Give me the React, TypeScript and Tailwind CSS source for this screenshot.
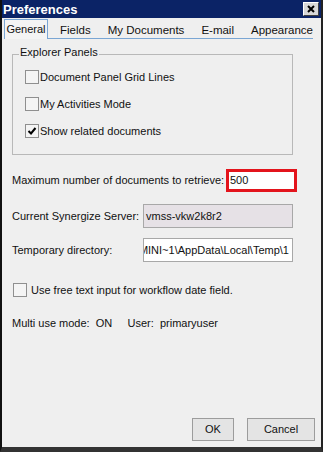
const font = { fontFamily: '"Liberation Sans", Arial, sans-serif' };

function Check({ checked }: { checked?: boolean }) {
  return (
    <span className="w-[14px] h-[14px] border border-[#8f8f8f] bg-[#f4f4f4] flex items-center justify-center shrink-0">
      {checked && (
        <svg width="10" height="10" viewBox="0 0 10 10">
          <path d="M1.5 5 L4 7.5 L8.5 2" stroke="#000" strokeWidth="2" fill="none" />
        </svg>
      )}
    </span>
  );
}

function CheckRow({ label, checked }: { label: string; checked?: boolean }) {
  return (
    <div className="flex items-center h-[14px]">
      <Check checked={checked} />
      <span className="ml-px whitespace-nowrap">{label}</span>
    </div>
  );
}

export default function App() {
  const tabs = ["Fields", "My Documents", "E-mail", "Appearance"];

  return (
    <div
      className="w-[323px] h-[452px] bg-[#efefef] text-[11px] text-[#111] flex flex-col border-l-2 border-r-2 border-b-[5px] border-l-[#111] border-r-[#222] border-b-[#333] overflow-hidden"
      style={font}
    >
      {/* title bar */}
      <div className="h-[18px] bg-[#0b2366] flex items-center justify-between pl-[1px] pr-[2px] shrink-0">
        <span className="text-white font-bold text-[13px] leading-none">Preferences</span>
        <span className="w-[16px] h-[14px] bg-[#d8d8d8] border border-t-white border-l-white border-b-[#404040] border-r-[#404040] flex items-center justify-center">
          <svg width="8" height="8" viewBox="0 0 8 8">
            <path d="M1 1 L7 7 M7 1 L1 7" stroke="#000" strokeWidth="2" />
          </svg>
        </span>
      </div>

      {/* tabs */}
      <div className="h-[21px] flex items-end pl-[2px] pr-[8px] shrink-0">
        <div className="h-[20px] w-[56px] border border-b-0 border-[#7aa6d4] bg-[#f4f4f4] flex items-center justify-center text-[11px]">
          General
        </div>
        <div className="flex-1 h-[17px] border-b border-[#7aa6d4] flex items-center gap-[17px] pl-[12px] whitespace-nowrap text-[11.5px]">
          {tabs.map((t) => (
            <span key={t} className="pt-[2px]">{t}</span>
          ))}
        </div>
      </div>

      {/* body */}
      <div className="flex-1 flex flex-col px-[10px] pt-[9px]">
        <div className="relative border border-[#b8b8b8] h-[101px] w-[281px] mt-[6px] flex flex-col gap-[13px] pl-[12px] pt-[15px]">
          <span className="absolute -top-[8px] left-[6px] bg-[#efefef] px-[1px] leading-none">Explorer Panels</span>
          <CheckRow label="Document Panel Grid Lines" />
          <CheckRow label="My Activities Mode" />
          <CheckRow label="Show related documents" checked />
        </div>

        <div className="flex items-center mt-[14px] h-[23px]">
          <span className="w-[214px] shrink-0 whitespace-nowrap">Maximum number of documents to retrieve:</span>
          <div className="w-[71px] h-[23px] border-[3px] border-[#e3141c] bg-white flex items-center pl-[1px]">500</div>
        </div>

        <div className="flex items-center mt-[12px] h-[24px]">
          <span className="w-[131px] shrink-0 whitespace-nowrap">Current Synergize Server:</span>
          <div className="w-[150px] h-[24px] border border-[#a8a8a8] bg-[#e6e1e6] flex items-center pl-[2px]">vmss-vkw2k8r2</div>
        </div>

        <div className="flex items-center mt-[10px] h-[24px]">
          <span className="w-[131px] shrink-0 whitespace-nowrap">Temporary directory:</span>
          <div className="w-[150px] h-[24px] border border-[#a8a8a8] bg-white flex items-center justify-end pr-[3px] overflow-hidden whitespace-nowrap">
            <span className="shrink-0">\ADMINI~1\AppData\Local\Temp\1</span>
          </div>
        </div>

        <div className="flex items-center mt-[21px] ml-[1px] h-[14px]">
          <Check />
          <span className="ml-[4px] whitespace-nowrap">Use free text input for workflow date field.</span>
        </div>

        <div className="mt-[18px] whitespace-pre">Multi use mode:  ON     User:  primaryuser</div>

        <div className="flex-1" />

        <div className="flex justify-end gap-[13px] mb-[6px] mr-[-4px]">
          <button className="w-[42px] h-[23px] border border-[#9c9c9c] bg-[#e4e4e4]">OK</button>
          <button className="w-[68px] h-[23px] border border-[#9c9c9c] bg-[#e4e4e4]">Cancel</button>
        </div>
      </div>
    </div>
  );
}
